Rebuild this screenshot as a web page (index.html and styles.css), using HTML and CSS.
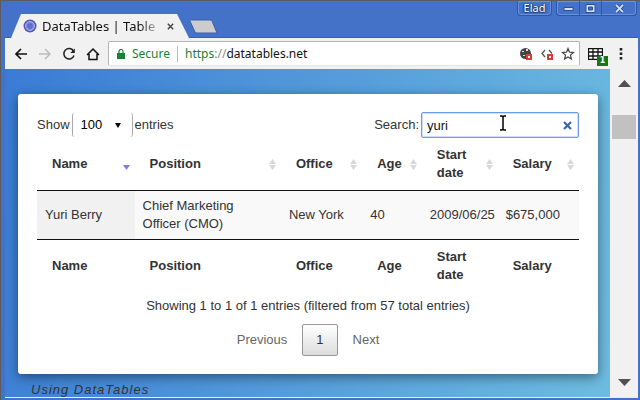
FILE: index.html
```html
<!DOCTYPE html>
<html lang="en">
<head>
<meta charset="utf-8">
<title>DataTables | Table plug-in for jQuery</title>
<link rel="stylesheet" href="styles.css">
</head>
<body>
<div class="window">
  <header class="titlebar">
    <div class="tab">
      <svg class="favicon" width="14" height="14" viewBox="0 0 14 14"><circle cx="7" cy="7" r="6.5" fill="#5558a8"/><circle cx="7" cy="7" r="4.5" fill="#7f8be0" stroke="#a6aeee"/><circle cx="7" cy="7" r="2.3" fill="#6672d2" stroke="#555fc0"/></svg>
      <span class="tab-title">DataTables | Table</span>
      <button class="tab-close" aria-label="Close tab"><svg width="7" height="7" viewBox="0 0 7 7"><path d="M.8.8l5.4 5.4M6.2.8L.8 6.2" stroke="#444" stroke-width="1.4"/></svg></button>
    </div>
    <button class="new-tab" aria-label="New tab"><svg width="30" height="15" viewBox="0 0 30 15"><path d="M1.500 1H22q1.500 0 2 1l5 12H9q-1.500 0-2-1z" fill="#ccc" stroke="#3b62a8"/></svg></button>
    <button class="profile">Elad</button>
    <div class="window-buttons">
      <button aria-label="Minimize"><svg width="11" height="9" viewBox="0 0 11 9"><path d="M1 3.500h9v3H1z" fill="#d4e2fa" stroke="#2b4f90"/></svg></button>
      <button aria-label="Maximize"><svg width="11" height="9" viewBox="0 0 11 9"><path d="M1 .5h9v8H1z" fill="#d4e2fa" stroke="#2b4f90"/><path d="M3.500 3h4v3h-4z" fill="#4472c8" stroke="#2b4f90"/></svg></button>
      <button class="wide" aria-label="Close"><svg width="11" height="9" viewBox="0 0 11 9"><path d="M2 .8l7 7.400M9 .8L2 8.200" stroke="#2b4f90" stroke-width="3.200"/><path d="M2 .8l7 7.400M9 .8L2 8.200" stroke="#d4e2fa" stroke-width="1.800"/></svg></button>
    </div>
  </header>

  <nav class="toolbar">
    <button aria-label="Back"><svg width="14" height="14" viewBox="0 0 14 14"><path d="M13 7H2M7 2L2 7l5 5" fill="none" stroke="#111" stroke-width="1.700"/></svg></button>
    <button aria-label="Forward"><svg width="14" height="14" viewBox="0 0 14 14"><path d="M1 7h11M7 2l5 5-5 5" fill="none" stroke="#bbb" stroke-width="1.500"/></svg></button>
    <button aria-label="Reload"><svg width="14" height="14" viewBox="0 0 14 14"><path d="M11.500 4A5.200 5.200 0 1 0 12 8.500" fill="none" stroke="#222" stroke-width="1.500"/><path d="M12.800 1.500v4.500H8.300z" fill="#222"/></svg></button>
    <button aria-label="Home"><svg width="14" height="14" viewBox="0 0 14 14"><path d="M1 8l6-6 6 6M3 7v5.500h8V7" fill="none" stroke="#111" stroke-width="1.500"/></svg></button>
    <form class="address">
      <svg width="8" height="10" viewBox="0 0 8 10"><path d="M0 4h8v6H0z" fill="#188038"/><path d="M2 4V2.500a2 2 0 0 1 4 0V4" fill="none" stroke="#188038" stroke-width="1.200"/></svg>
      <span class="secure">Secure</span>
      <a class="url" href="#"><span class="scheme">https</span><span class="slashes">://</span>datatables.net</a>
      <button type="button" aria-label="Cookies blocked"><svg width="14" height="14" viewBox="0 0 14 14"><circle cx="6.500" cy="6.500" r="5.500" fill="#444"/><path d="M3 4h2v1H3zM7 2h2v2H7zM4 8h2v1H4z" fill="#ddd"/><path d="M7 7h6v6H7z" fill="#dc3c33"/><path d="M9 9h2v2H9z" fill="#fff"/></svg></button>
      <button type="button" aria-label="Script blocked"><svg width="14" height="14" viewBox="0 0 14 14"><path d="M5 3L2 6.500 5 10M9 3l3 3.500" fill="none" stroke="#555" stroke-width="1.300"/><path d="M7 7h6v6H7z" fill="#dc3c33"/><path d="M9 9h2v2H9z" fill="#fff"/></svg></button>
      <button type="button" aria-label="Bookmark"><svg width="14" height="14" viewBox="0 0 14 14"><path d="M7 1.500l1.500 3.700 4 .3-3 2.600.9 3.900L7 9.900 3.600 12l.9-3.900-3-2.600 4-.3z" fill="none" stroke="#444" stroke-width="1.200"/></svg></button>
    </form>
    <button class="extension" aria-label="Table extension"><svg width="15" height="12" viewBox="0 0 15 12"><path d="M.5.5h14v11H.5zM.5 4h14M.5 8h14M5 0v12M10 0v12" fill="#fff" stroke="#111" stroke-width="1.300"/></svg><span class="badge">1</span></button>
    <button class="menu" aria-label="Menu"><svg width="4" height="12" viewBox="0 0 4 12"><path d="M.7 0h2.600v2.600H.7zM.7 4.500h2.600v2.600H.7zM.7 9h2.600v2.600H.7z" fill="#222"/></svg></button>
  </nav>

  <div class="viewport">
    <main class="page">
      <section class="card">
        <div class="controls">
          <label class="length">Show
            <span class="select-wrap"><select><option>10</option><option selected>100</option></select><svg class="caret" width="6" height="5" viewBox="0 0 6 5"><path d="M0 0h6L3 5z" fill="#000"/></svg></span>
            entries</label>
          <div class="filter"><label for="search">Search:</label>
            <span class="search-wrap"><input id="search" type="text" value="yuri"><button class="clear" aria-label="Clear search"><svg width="9" height="9" viewBox="0 0 9 9"><path d="M1 1l7 7M8 1L1 8" stroke="#3e64a8" stroke-width="2.200"/></svg></button><svg class="pointer" width="8" height="16" viewBox="0 0 8 16"><path d="M1 1h2l1 1 1-1h2M4 2v12M1 15h2l1-1 1 1h2" fill="none" stroke="#000" stroke-width="1.500"/></svg></span>
          </div>
        </div>
        <table>
          <colgroup><col class="c-name"><col class="c-position"><col class="c-office"><col class="c-age"><col class="c-date"><col class="c-salary"></colgroup>
          <thead><tr><th class="sorted">Name</th><th>Position</th><th>Office</th><th>Age</th><th>Start date</th><th>Salary</th></tr></thead>
          <tbody><tr><td class="key">Yuri Berry</td><td>Chief Marketing Officer (CMO)</td><td>New York</td><td>40</td><td>2009/06/25</td><td>$675,000</td></tr></tbody>
          <tfoot><tr><th>Name</th><th>Position</th><th>Office</th><th>Age</th><th>Start date</th><th>Salary</th></tr></tfoot>
        </table>
        <p class="info">Showing 1 to 1 of 1 entries (filtered from 57 total entries)</p>
        <div class="pager"><button>Previous</button><button class="current">1</button><button>Next</button></div>
      </section>
      <p class="caption">Using DataTables</p>
    </main>
    <aside class="scrollbar">
      <svg width="13" height="7" viewBox="0 0 13 7"><path d="M0 7h13L6.500 0z" fill="#505050"/></svg>
      <div class="thumb"></div>
      <svg class="down" width="13" height="7" viewBox="0 0 13 7"><path d="M0 0h13L6.500 7z" fill="#505050"/></svg>
    </aside>
  </div>
</div>
</body>
</html>
```
FILE: styles.css
```css
* { box-sizing: border-box; }
body {
  margin: 0;
  font: 13px/18px "Liberation Sans", Arial, sans-serif;
  color: #333;
}
button {
  display: flex;
  align-items: center;
  justify-content: center;
  margin: 0;
  padding: 0;
  border: 0;
  background: none;
  font: inherit;
  color: inherit;
}
svg { display: block; flex: none; }
p { margin: 0; }

.window {
  display: flex;
  flex-direction: column;
  height: 100vh;
  overflow: hidden;
  padding: 0 2px 2px 4px;
  background: #4472c8;
  border: solid #5c5c60;
  border-width: 1px 0 0 1px;
}

.titlebar {
  display: flex;
  align-items: flex-start;
  height: 37px;
  flex: none;
  margin-left: -1px;
  border-bottom: 1px solid #3a5fa5;
}
.tab {
  display: flex;
  align-items: center;
  width: 178px;
  height: 24px;
  margin: 13px 0 0 7px;
  padding: 0 9px 0 12px;
  background: #f1f1f1;
  clip-path: polygon(0 100%, 10px 0, 166px 0, 100% 100%);
}
.tab-title {
  flex: 1;
  margin-left: 5px;
  overflow: hidden;
  white-space: nowrap;
  font: 13px/18px "Noto Sans", sans-serif;
  background: linear-gradient(90deg, #111 82%, #ccc 98%);
  background-clip: text;
  color: transparent;
}
.tab-close { width: 19px; height: 18px; }
.new-tab { margin: 18px auto 0 -1px; }
.profile, .window-buttons {
  height: 15px;
  border: 1px solid #2f56a0;
  border-top: 0;
  border-radius: 0 0 4px 4px;
  box-shadow: inset 0 0 0 1px #6b91da;
}
.profile {
  width: 35px;
  margin-right: 4px;
  color: #fff;
  font: 11px/14px "Noto Sans", sans-serif;
  text-shadow: 0 1px 1px #1c3568, 1px 0 1px #1c3568, -1px 0 1px #1c3568;
}
.window-buttons { display: flex; width: 81px; margin-right: 1px; }
.window-buttons button { width: 22px; height: 14px; }
.window-buttons button + button { border-left: 1px solid #2f56a0; }
.window-buttons .wide { flex: 1; }

.toolbar {
  display: flex;
  align-items: center;
  gap: 10px;
  height: 31px;
  flex: none;
  padding: 0 15px 0 9px;
  background: #f1f1f1;
}
.address {
  display: flex;
  flex: 1;
  align-items: center;
  gap: 7px;
  height: 25px;
  margin: 0 -2px;
  padding: 0 4px 0 8px;
  background: #fff;
  border: 1px solid #b4b4b4;
  border-bottom-color: #e6e6e6;
  border-radius: 2px;
  font: 12px/16px "Noto Sans", sans-serif;
}
.secure { padding-right: 7px; border-right: 1px solid #bbb; color: #188038; }
.url { flex: 1; color: #111; text-decoration: none; }
.scheme { color: #188038; }
.slashes { color: #888; }
.extension { position: relative; margin-right: 6px; }
.badge {
  position: absolute;
  top: 8px;
  left: 9px;
  width: 11px;
  height: 10px;
  background: #1e7416;
  color: #fff;
  font: bold 8px/10px "DejaVu Sans", sans-serif;
}

.viewport {
  display: flex;
  flex: 1;
  min-height: 0;
  border-bottom: 1px solid #e6eefa;
}
.page {
  flex: 1;
  padding: 25px 12px 0 13px;
  overflow: hidden;
  background: linear-gradient(100deg, #3a7bd5, #6dbce0);
}
.card {
  padding: 18px 19px;
  background: #fff;
  border-radius: 3px;
  box-shadow: 0 3px 12px rgba(0, 0, 0, 0.45);
}
.controls { display: flex; justify-content: space-between; align-items: center; }
.length, .filter { display: flex; align-items: center; gap: 2px; }
.select-wrap, .search-wrap { position: relative; display: flex; }
select {
  appearance: none;
  width: 61px;
  height: 24px;
  padding: 0 8px;
  border: solid #aaa;
  border-width: 0 1px;
  border-radius: 3px;
  background: #fff;
  color: #000;
  font: inherit;
}
.caret { position: absolute; top: 10px; right: 12px; }
input {
  width: 158px;
  height: 26px;
  padding: 0 24px 0 5px;
  border: 1px solid #6c9bea;
  border-radius: 2px;
  box-shadow: inset 0 0 0 1px #cfdff9;
  color: #111;
  font: inherit;
}
.clear { position: absolute; top: 9px; right: 7px; }
.pointer { position: absolute; top: 3px; left: 78px; }

table { width: 100%; table-layout: fixed; border-collapse: separate; border-spacing: 0; }
.c-name { width: 18%; }
.c-position { width: 27%; }
.c-office { width: 15%; }
.c-age { width: 11%; }
.c-date { width: 14%; }
th { padding: 8px 12px 8px 15px; text-align: left; }
thead th {
  border-bottom: 1px solid #111;
  background: url("data:image/svg+xml,%3Csvg xmlns='http://www.w3.org/2000/svg' width='7' height='11'%3E%3Cpath d='M0 5h7L3.500 0zM0 6h7L3.500 11z' fill='%23d8d8d8'/%3E%3C/svg%3E") no-repeat right 5px center;
}
thead th.sorted {
  background-image: url("data:image/svg+xml,%3Csvg xmlns='http://www.w3.org/2000/svg' width='7' height='11'%3E%3Cpath d='M0 6h7L3.500 11z' fill='%237b7fe0'/%3E%3C/svg%3E");
}
td {
  padding: 6px 0 6px 8px;
  border-bottom: 1px solid #111;
  background: #f9f9f9;
}
td:nth-child(2) { padding-right: 40px; }
.key { background: #f1f1f1; }
.info { margin-top: 5px; text-align: center; }
.pager { display: flex; justify-content: center; gap: 2px; margin-top: 9px; }
.pager button { height: 32px; padding: 0 13px; color: #666; }
.pager .current {
  border: 1px solid #979797;
  border-radius: 2px;
  background: linear-gradient(#fff, #dcdcdc);
  color: #333;
}
.caption { margin: 7px 13px; font-style: italic; letter-spacing: 1px; }

.scrollbar {
  display: flex;
  flex-direction: column;
  align-items: center;
  width: 28px;
  padding: 11px 2px;
  background: #f1f1f1;
}
.thumb { width: 100%; height: 24px; margin-top: 28px; background: #c1c1c1; }
.down { margin-top: auto; }
```
